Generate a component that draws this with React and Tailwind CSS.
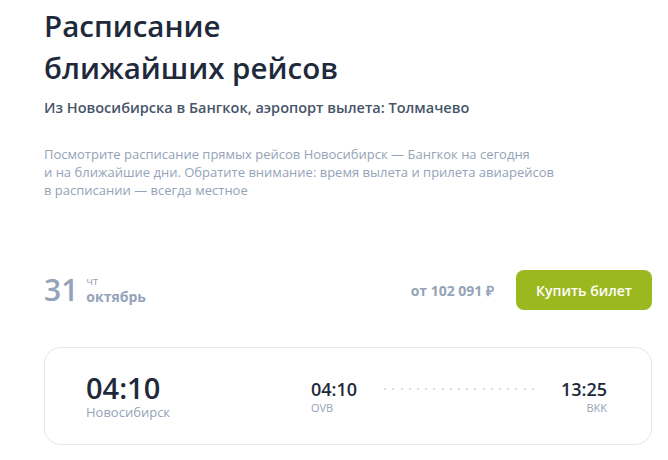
import React from "react";

const dots = Array.from({ length: 19 });

const App = () => {
  return (
    <div className="min-h-screen bg-white font-['Open_Sans',sans-serif] pl-[44px] pr-[16px] pt-[5px]">
      <h1 className="text-[29.5px] leading-[42px] font-semibold text-[#1e293b]">
        Расписание
        <br />
        ближайших рейсов
      </h1>
      <p className="mt-[9px] text-[14.5px] leading-[20px] font-semibold text-[#475569]">
        Из Новосибирска в Бангкок, аэропорт вылета: Толмачево
      </p>
      <p className="mt-[27px] text-[13px] leading-[18px] text-[#94a3b8]">
        Посмотрите расписание прямых рейсов Новосибирск — Бангкок на сегодня
        <br />и на ближайшие дни. Обратите внимание: время вылета и прилета
        авиарейсов
        <br />в расписании — всегда местное
      </p>

      <div className="mt-[71px] flex items-center justify-between">
        <div className="flex items-center gap-[8px]">
          <span className="text-[30px] leading-[36px] font-semibold text-[#94a3b8]">31</span>
          <div className="flex flex-col gap-[2px]">
            <span className="text-[11px] leading-[12px] text-[#94a3b8]">чт</span>
            <span className="text-[14px] leading-[16px] font-bold text-[#94a3b8]">октябрь</span>
          </div>
        </div>
        <div className="flex items-center gap-[22px]">
          <span className="text-[14px] font-bold text-[#94a3b8]">от 102 091 ₽</span>
          <button className="h-[40px] w-[136px] rounded-[8px] bg-[#9bb91f] text-[14px] font-semibold text-white">
            Купить билет
          </button>
        </div>
      </div>

      <div className="mt-[37px] flex h-[98px] items-center rounded-[16px] border border-[#e2e8f0] pl-[41px] pr-[44px]">
        <div className="flex w-[225px] flex-col">
          <span className="text-[29px] leading-[32px] font-semibold text-[#1e293b]">04:10</span>
          <span className="text-[13px] leading-[16px] text-[#94a3b8]">Новосибирск</span>
        </div>
        <div className="flex flex-1 items-start">
          <div className="flex flex-col">
            <span className="text-[18px] leading-[24px] font-semibold text-[#1e293b]">04:10</span>
            <span className="text-[11px] leading-[14px] text-[#94a3b8]">OVB</span>
          </div>
          <div className="mx-[27px] mt-[11px] flex flex-1 justify-between">
            {dots.map((_, i) => (
              <span key={i} className="h-[2px] w-[2px] rounded-full bg-[#cbd5e1]"></span>
            ))}
          </div>
          <div className="flex flex-col items-end">
            <span className="text-[18px] leading-[24px] font-semibold text-[#1e293b]">13:25</span>
            <span className="text-[11px] leading-[14px] text-[#94a3b8]">BKK</span>
          </div>
        </div>
      </div>
    </div>
  );
};

export default App;
